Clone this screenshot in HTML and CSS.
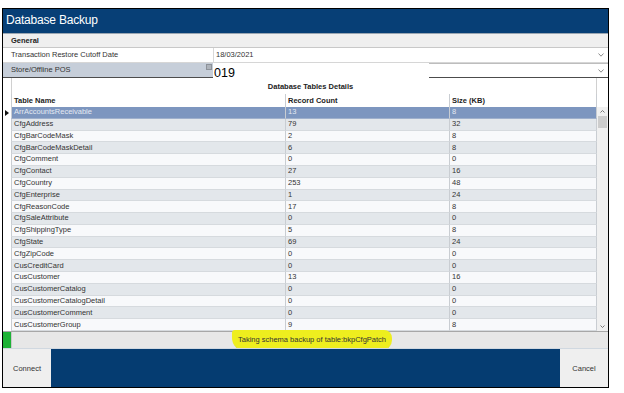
FILE: index.html
```html
<!DOCTYPE html>
<html>
<head>
<meta charset="utf-8">
<link rel="stylesheet" href="styles.css">
</head>
<body>
<div class="window">
  <div class="titlebar">Database Backup</div>
  <div class="general">General</div>
  <div class="prop-row">
    <div class="prop-label">Transaction Restore Cutoff Date</div>
    <div class="prop-value">
      <span>18/03/2021</span>
      <svg class="chev" width="6" height="4" viewBox="0 0 6 4"><path d="M0.5 0.5 L3 3.2 L5.5 0.5" stroke="#8c8c8c" stroke-width="1" fill="none"/></svg>
    </div>
  </div>
  <div class="prop-row store">
    <div class="prop-label store-label"><span>Store/Offline POS</span><span class="mini-icon"></span></div>
    <div class="store-text">019</div>
    <div class="store-combo">
      <svg class="chev" width="6" height="4" viewBox="0 0 6 4"><path d="M0.5 0.5 L3 3.2 L5.5 0.5" stroke="#8c8c8c" stroke-width="1" fill="none"/></svg>
    </div>
  </div>
  <div class="tables">
    <div class="grid-title">Database Tables Details</div>
    <div class="grid-head">
      <div class="rh"></div>
      <div class="c c1">Table Name</div>
      <div class="c c2">Record Count</div>
      <div class="c c3">Size (KB)</div>
    </div>
    <div class="grid-body">
      <div class="rows">
        <div class="row sel"><div class="rh"><span class="marker"></span></div><div class="c c1">ArrAccountsReceivable</div><div class="c c2">13</div><div class="c c3">8</div></div>
        <div class="row alt"><div class="rh"></div><div class="c c1">CfgAddress</div><div class="c c2">79</div><div class="c c3">32</div></div>
        <div class="row"><div class="rh"></div><div class="c c1">CfgBarCodeMask</div><div class="c c2">2</div><div class="c c3">8</div></div>
        <div class="row alt"><div class="rh"></div><div class="c c1">CfgBarCodeMaskDetail</div><div class="c c2">6</div><div class="c c3">8</div></div>
        <div class="row"><div class="rh"></div><div class="c c1">CfgComment</div><div class="c c2">0</div><div class="c c3">0</div></div>
        <div class="row alt"><div class="rh"></div><div class="c c1">CfgContact</div><div class="c c2">27</div><div class="c c3">16</div></div>
        <div class="row"><div class="rh"></div><div class="c c1">CfgCountry</div><div class="c c2">253</div><div class="c c3">48</div></div>
        <div class="row alt"><div class="rh"></div><div class="c c1">CfgEnterprise</div><div class="c c2">1</div><div class="c c3">24</div></div>
        <div class="row"><div class="rh"></div><div class="c c1">CfgReasonCode</div><div class="c c2">17</div><div class="c c3">8</div></div>
        <div class="row alt"><div class="rh"></div><div class="c c1">CfgSaleAttribute</div><div class="c c2">0</div><div class="c c3">0</div></div>
        <div class="row"><div class="rh"></div><div class="c c1">CfgShippingType</div><div class="c c2">5</div><div class="c c3">8</div></div>
        <div class="row alt"><div class="rh"></div><div class="c c1">CfgState</div><div class="c c2">69</div><div class="c c3">24</div></div>
        <div class="row"><div class="rh"></div><div class="c c1">CfgZipCode</div><div class="c c2">0</div><div class="c c3">0</div></div>
        <div class="row alt"><div class="rh"></div><div class="c c1">CusCreditCard</div><div class="c c2">0</div><div class="c c3">0</div></div>
        <div class="row"><div class="rh"></div><div class="c c1">CusCustomer</div><div class="c c2">13</div><div class="c c3">16</div></div>
        <div class="row alt"><div class="rh"></div><div class="c c1">CusCustomerCatalog</div><div class="c c2">0</div><div class="c c3">0</div></div>
        <div class="row"><div class="rh"></div><div class="c c1">CusCustomerCatalogDetail</div><div class="c c2">0</div><div class="c c3">0</div></div>
        <div class="row alt"><div class="rh"></div><div class="c c1">CusCustomerComment</div><div class="c c2">0</div><div class="c c3">0</div></div>
        <div class="row"><div class="rh"></div><div class="c c1">CusCustomerGroup</div><div class="c c2">9</div><div class="c c3">8</div></div>
      </div>
      <div class="scroll">
        <svg class="arrow" width="11" height="9" viewBox="0 0 11 9"><path d="M3.5 5.5 L5.5 3.5 L7.5 5.5" stroke="#777" stroke-width="1" fill="none"/></svg>
        <div class="thumb"></div>
        <div class="track"></div>
        <svg class="arrow" width="11" height="9" viewBox="0 0 11 9"><path d="M3.5 3.5 L5.5 5.5 L7.5 3.5" stroke="#777" stroke-width="1" fill="none"/></svg>
      </div>
    </div>
  </div>
  <div class="status">
    <div class="green"></div>
    <div class="status-text"><span class="hl">Taking schema backup of table:bkpCfgPatch</span></div>
  </div>
  <div class="footer">
    <div class="btn">Connect</div>
    <div class="btn">Cancel</div>
  </div>
</div>
</body>
</html>
```
FILE: styles.css
```css
* { box-sizing: border-box; }
body {
  margin: 0;
  background: #fff;
  font-family: "Liberation Sans", Arial, sans-serif;
  font-size: 7.5px;
  color: #333;
}
.window {
  margin: 8px 0 0 2px;
  width: 607px;
  height: 380px;
  border: 1px solid #000;
  display: flex;
  flex-direction: column;
  overflow: hidden;
}
.titlebar {
  height: 25px;
  background: #073f76;
  border-bottom: 1px solid #9aa6b2;
  color: #fff;
  font-size: 12px;
  line-height: 23px;
  padding-left: 3px;
  letter-spacing: -0.2px;
}
.general {
  height: 14px;
  background: #efefef;
  border-bottom: 1px solid #c8c8c8;
  font-weight: bold;
  line-height: 13px;
  padding-left: 8px;
  color: #222;
}
.prop-row {
  display: flex;
  height: 15px;
  border-bottom: 1px solid #d6d6d6;
}
.prop-label {
  width: 210px;
  padding-left: 8px;
  line-height: 14px;
}
.prop-value {
  flex: 1;
  border-left: 1px solid #d8d8d8;
  padding-left: 2px;
  padding-right: 4px;
  display: flex;
  justify-content: space-between;
  align-items: center;
  line-height: 14px;
}
.chev { display: block; }
.store { border-bottom: none; }
.store-label {
  background: #c6ced9;
  border-bottom: 1px solid #4c4c4c;
  display: flex;
  justify-content: space-between;
  align-items: flex-start;
  padding-right: 1px;
}
.mini-icon {
  width: 6px;
  height: 6px;
  margin-top: 1px;
  background: #aeb3ba;
  border: 1px solid #8d9299;
}
.store-text {
  width: 216px;
  font-size: 12.5px;
  color: #000;
  line-height: 14px;
  padding-top: 3px;
  padding-left: 1px;
  background: #fff;
  position: relative;
  z-index: 1;
  height: 15px;
}
.store-combo {
  flex: 1;
  border-top: 1px solid #bdbdbd;
  border-bottom: 1px solid #4c4c4c;
  display: flex;
  justify-content: flex-end;
  align-items: center;
  padding-right: 4px;
}
.tables {
  height: 253px;
  display: flex;
  flex-direction: column;
}
.grid-title {
  margin-left: 8px;
  width: 586px;
  height: 16px;
  border-left: 1px solid #d0d0d0;
  border-right: 1px solid #d0d0d0;
  text-align: center;
  font-weight: bold;
  line-height: 17px;
  padding-left: 13px;
  color: #222;
}
.grid-head, .row {
  display: grid;
  grid-template-columns: 8px 274px 164px 148px;
}
.grid-head {
  height: 13px;
  font-weight: bold;
  color: #222;
}
.grid-head .c { line-height: 13px; background: #fff; }
.c {
  border-left: 1px solid #c9cdd2;
  padding-left: 2px;
  white-space: nowrap;
  overflow: hidden;
}
.c3 { border-right: 1px solid #c9cdd2; }
.grid-body {
  display: flex;
  height: 224px;
  overflow: hidden;
}
.rows {
  width: 594px;
  display: grid;
  grid-template-rows: repeat(19, minmax(0, 1fr));
  height: 224px;
}
.row { min-height: 0; }
.row .c {
  background: #f8f9fb;
  border-bottom: 1px solid #d6dade;
  line-height: 10.5px;
  padding-top: 0.3px;
}
.row.alt .c { background: #e3e7eb; }
.row.sel .c {
  background: #7d96bf;
  color: #e4e9f2;
  border-bottom-color: #9fb0cc;
}
.rh {
  background: #fff;
  display: flex;
  align-items: center;
  padding-left: 2px;
}
.marker {
  width: 0;
  height: 0;
  border-left: 4px solid #111;
  border-top: 3px solid transparent;
  border-bottom: 3px solid transparent;
}
.scroll {
  width: 11px;
  background: #f0f0f0;
  display: flex;
  flex-direction: column;
}
.arrow { display: block; flex: none; }
.thumb {
  height: 12px;
  margin: 0 1px;
  background: #cdcdcd;
  flex: none;
}
.track { flex: 1; }
.status {
  height: 17px;
  border-top: 1px solid #a7a7a7;
  display: flex;
  background: #e7e7e7;
}
.green {
  width: 8px;
  background: #1eb236;
}
.status-text {
  flex: 1;
  text-align: center;
  line-height: 15px;
  padding-left: 4px;
  border-left: 1px solid #c9c9c9;
  color: #333;
}
.hl {
  background: #eeee1e;
  padding: 5px 6px 6px 6px;
  border-radius: 3px 8px 10px 12px;
  box-shadow: 0 2px 0 -1px #c9c91a;
}
.footer {
  flex: 1;
  background: #053c71;
  border-top: 1px solid #d0d8e0;
  display: flex;
  justify-content: space-between;
}
.btn {
  width: 48px;
  background: #efefef;
  display: flex;
  align-items: center;
  justify-content: center;
  color: #333;
}
```
